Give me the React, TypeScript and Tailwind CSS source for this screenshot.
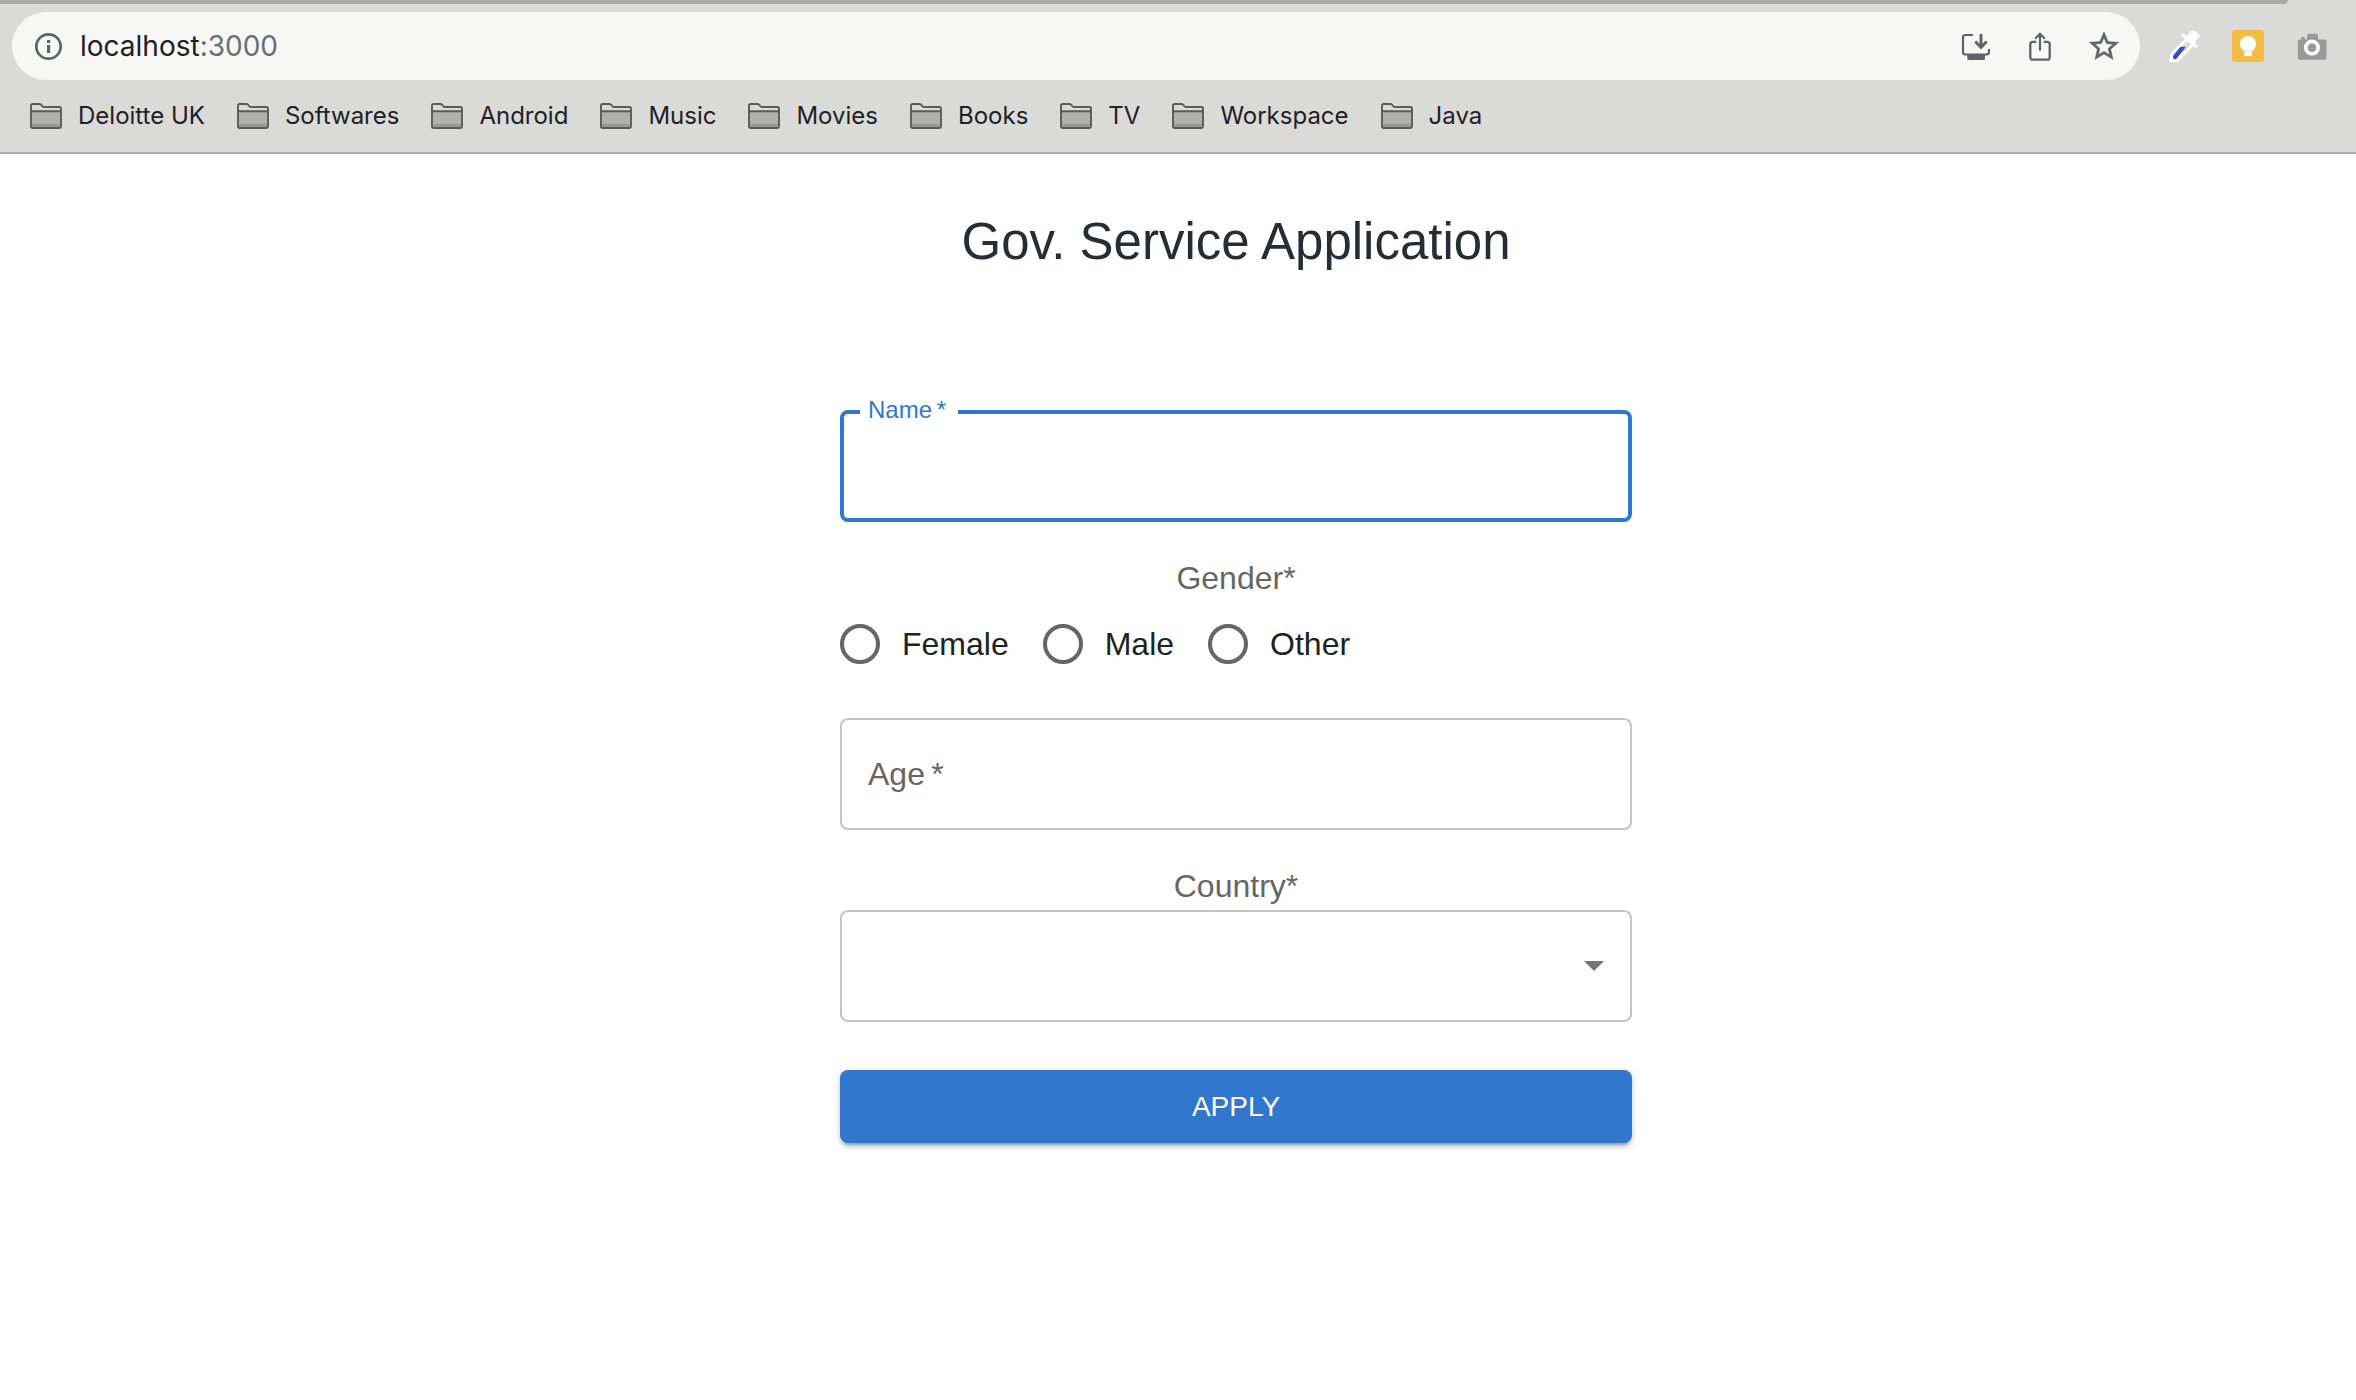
import React from "react";

const bookmarks = [
  "Deloitte UK",
  "Softwares",
  "Android",
  "Music",
  "Movies",
  "Books",
  "TV",
  "Workspace",
  "Java",
];

const genders = ["Female", "Male", "Other"];

function InfoIcon() {
  return (
    <svg viewBox="0 0 32 32" className="size-8" fill="none" aria-hidden="true">
      <circle cx="16.500" cy="16.500" r="12.200" stroke="#5f6368" strokeWidth="2.700" />
      <path d="M15 10h3.200v3h-3.200zM15 15h3.200v8h-3.200z" fill="#5f6368" />
    </svg>
  );
}

function InstallIcon() {
  return (
    <svg viewBox="0 0 32 32" className="size-8" fill="none" aria-hidden="true">
      <path
        d="M13 5H5.500Q3 5 3 7.500V22Q3 24.500 5.500 24.500H26.500Q29 24.500 29 22V19"
        stroke="#5f6368"
        strokeWidth="2.200"
      />
      <path d="M7.300 25h17.700v3.500q0 1.500-1.500 1.500h-14.700q-1.500 0-1.500-1.500z" fill="#5f6368" />
      <path d="M21 4v13.500M15.300 11.500l5.700 6 5.700-6" stroke="#5f6368" strokeWidth="2.900" />
    </svg>
  );
}

function ShareIcon() {
  return (
    <svg viewBox="0 0 32 32" className="size-8" fill="none" stroke="#5f6368" aria-hidden="true">
      <path
        d="M12.300 11.800H8.800Q6.300 11.800 6.300 14.300V27.200Q6.300 29.700 8.800 29.700H23.200Q25.700 29.700 25.700 27.200V14.300Q25.700 11.800 23.200 11.800H19.700"
        strokeWidth="2.300"
      />
      <path d="M16 4v16.700M11.200 8.800L16 3.800l4.800 5" strokeWidth="2.200" />
    </svg>
  );
}

function StarIcon() {
  return (
    <svg viewBox="1.1 0.85 21.8 21.8" className="size-8" fill="#5f6368" stroke="#5f6368" strokeWidth="0.300" aria-hidden="true">
      <path d="M22 9.240l-7.190-.62L12 2 9.190 8.630 2 9.240l5.460 4.730L5.820 21 12 17.270 18.180 21l-1.630-7.030L22 9.240zM12 15.400l-3.760 2.270 1-4.280-3.320-2.880 4.380-.38L12 6.100l1.710 4.040 4.380.38-3.320 2.880 1 4.280L12 15.400z" />
    </svg>
  );
}

function DropperIcon() {
  return (
    <svg viewBox="0 0 32 32" className="size-8" fill="none" aria-hidden="true">
      <path
        d="M19 9L4 24L3 31L9.500 30.500L24.500 15"
        stroke="#fff"
        strokeWidth="3"
        strokeLinejoin="round"
      />
      <path d="M4 24L12 16.500H18L9.500 30.500L3 31z" fill="#fff" />
      <path d="M7 27L13.500 19" stroke="#3550b8" strokeWidth="4.400" strokeLinecap="round" />
      <path d="M11 18.800l2.500-2h4.500l-3 4z" fill="#3550b8" />
      <path d="M15.300 5.300L27.700 15.800" stroke="#fff" strokeWidth="3.600" strokeLinecap="round" />
      <path d="M18 7L23 .8Q24.500-.2 26 .8L31 4.500Q32.300 6 31 7.500L25.500 14z" fill="#fff" />
    </svg>
  );
}

function BulbIcon() {
  return (
    <svg viewBox="0 0 32 32" className="size-8" aria-hidden="true">
      <rect width="32" height="32" rx="3" fill="#f3bc42" />
      <circle cx="16" cy="14" r="8" fill="#fff" />
      <path d="M12 20.500h8v-1.500h-8z" fill="#fff" />
      <path d="M12 22.200h8v3.600h-8z" fill="#fff" />
    </svg>
  );
}

function CameraIcon() {
  return (
    <svg viewBox="0 0 32 32" className="size-8" aria-hidden="true">
      <rect x="1.800" y="9.500" width="28.700" height="20.300" rx="2" fill="#999" />
      <rect x="5.200" y="7" width="3.800" height="4" rx="1.200" fill="#999" />
      <path d="M11 10V5.500q0-1.800 1.800-1.800h7.400q1.800 0 1.800 1.800V10z" fill="#999" />
      <circle cx="16" cy="17.600" r="6.200" fill="#999" stroke="#fff" strokeWidth="3.600" />
    </svg>
  );
}

function FolderIcon() {
  return (
    <svg viewBox="0 0 32 26" className="h-[26px] w-8" fill="none" aria-hidden="true">
      <path d="M2 8.500h28v15.500H2z" fill="#b0b0ae" />
      <path d="M2 21h28v3H2z" fill="#999997" />
      <path
        d="M1 23.500V2.500Q1 1 2.500 1H9.500Q10.500 1 11.300 2L12.500 3.300Q13.200 4 14.200 4H29.500Q31 4 31 5.500V23.500Q31 25 29.500 25H2.500Q1 25 1 23.500zM1 8.200H31"
        stroke="#5a5a59"
        strokeWidth="1.900"
      />
    </svg>
  );
}

function BrowserBar() {
  return (
    <header className="border-b-2 border-[#b0b0b0] bg-[#dadad8] font-['Inter',sans-serif] text-[#202124]">
      <div className="mr-[68px] h-1 rounded-br-lg bg-[#abaaa6]" />
      <div className="flex items-center pt-2 pr-7 pl-3">
        <div className="flex h-[68px] grow items-center gap-8 rounded-full bg-[#f7f8f6] px-5">
          <div className="flex grow items-center gap-4">
            <button type="button" aria-label="View site information">
              <InfoIcon />
            </button>
            <a href="http://localhost:3000" className="text-[28px] leading-9">
              localhost<span className="text-[#6b6d70]">:3000</span>
            </a>
          </div>
          <button type="button" aria-label="Install app">
            <InstallIcon />
          </button>
          <button type="button" aria-label="Share this page">
            <ShareIcon />
          </button>
          <button type="button" aria-label="Bookmark this page">
            <StarIcon />
          </button>
        </div>
        <div className="ml-7 flex gap-8">
          <button type="button" aria-label="Color picker">
            <DropperIcon />
          </button>
          <button type="button" aria-label="Notes">
            <BulbIcon />
          </button>
          <button type="button" aria-label="Screenshot">
            <CameraIcon />
          </button>
        </div>
      </div>
      <nav aria-label="Bookmarks" className="flex h-[72px] items-center gap-8 px-[30px]">
        {bookmarks.map((name) => (
          <button key={name} type="button" className="flex items-center gap-4 text-2xl">
            <FolderIcon />
            <span>{name}</span>
          </button>
        ))}
      </nav>
    </header>
  );
}

export default function App() {
  return (
    <div className="min-h-screen bg-white">
      <BrowserBar />
      <main className="flex flex-col items-center pt-14 pl-[116px] font-['Liberation_Sans',Arial,sans-serif]">
        <h1 className="text-[51px] leading-[64px] text-[#282c34]">Gov. Service Application</h1>
        <form
          className="mt-[136px] flex w-full max-w-[792px] flex-col text-[32px]"
          onSubmit={(event) => event.preventDefault()}
        >
          <div className="relative">
            <input
              id="name"
              type="text"
              required
              className="block h-28 w-full rounded-lg border-4 border-[#3077cd] px-7 outline-none"
            />
            <label
              htmlFor="name"
              className="absolute -top-4 left-5 bg-white pr-3 pl-2 text-2xl text-[#3077cd]"
            >
              Name&thinsp;*
            </label>
          </div>

          <fieldset className="mt-8">
            <legend className="w-full text-center leading-[48px] text-[#666]">Gender*</legend>
            <div className="flex h-[84px] items-center gap-[34px]">
              {genders.map((gender) => (
                <label key={gender} className="flex items-center gap-[22px] text-[#212121]">
                  <input
                    type="radio"
                    name="gender"
                    value={gender}
                    className="size-10 appearance-none rounded-full border-4 border-[#666] checked:border-[12px] checked:border-[#3077cd]"
                  />
                  {gender}
                </label>
              ))}
            </div>
          </fieldset>

          <div className="relative mt-8">
            <input
              id="age"
              type="text"
              required
              placeholder=" "
              className="peer block h-28 w-full rounded-lg border-2 border-[#c4c4c4] px-7 outline-none"
            />
            <label
              htmlFor="age"
              className="pointer-events-none absolute inset-y-0 left-7 hidden items-center text-[#666] peer-placeholder-shown:flex"
            >
              Age&thinsp;*
            </label>
          </div>

          <label htmlFor="country" className="mt-8 text-center leading-[48px] text-[#666]">
            Country*
          </label>
          <div className="relative">
            <select
              id="country"
              required
              defaultValue=""
              className="block h-28 w-full appearance-none rounded-lg border-2 border-[#c4c4c4] bg-white px-7 outline-none"
            >
              <option value="" />
              <option>India</option>
              <option>United Kingdom</option>
            </select>
            <svg
              viewBox="0 0 20 10"
              className="pointer-events-none absolute inset-y-0 right-7 my-auto h-[10px] w-5"
              aria-hidden="true"
            >
              <path d="M0 0h20L10 10z" fill="#757575" />
            </svg>
          </div>

          <button
            type="submit"
            className="mt-12 rounded-lg bg-[#3077cd] py-3 text-[28px] leading-[49px] text-white shadow-[0_6px_2px_-4px_rgba(0,0,0,0.2),0_4px_4px_rgba(0,0,0,0.14),0_2px_10px_rgba(0,0,0,0.12)]"
          >
            APPLY
          </button>
        </form>
      </main>
    </div>
  );
}
